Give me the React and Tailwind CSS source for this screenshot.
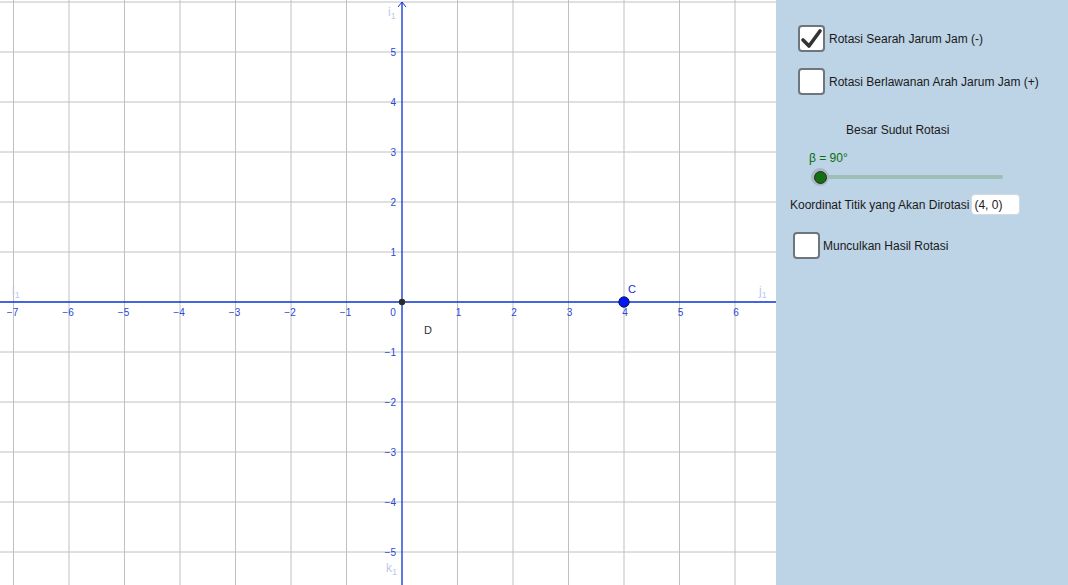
import React from "react";

const OX = 402;
const OY = 302;
const SX = 55.5;
const SY = 50;

const xs = [-7, -6, -5, -4, -3, -2, -1, 1, 2, 3, 4, 5, 6];
const ys = [5, 4, 3, 2, 1, -1, -2, -3, -4, -5];

function Graph() {
  return (
    <svg width="776" height="585" className="block" style={{ fontFamily: '"Liberation Sans", Arial, sans-serif' }}>
      <rect width="776" height="585" fill="#ffffff" />
      {/* grid */}
      {xs.map((v) => (
        <line key={"gx" + v} x1={OX + v * SX} y1="0" x2={OX + v * SX} y2="585" stroke="#c0c0c0" strokeWidth="1" />
      ))}
      {[6, ...ys].map((v) => (
        <line key={"gy" + v} x1="0" y1={OY - v * SY} x2="776" y2={OY - v * SY} stroke="#c0c0c0" strokeWidth="1" />
      ))}
      {/* axes */}
      <line x1="0" y1={OY} x2="776" y2={OY} stroke="#0832d8" strokeWidth="1.3" />
      <line x1={OX} y1="2" x2={OX} y2="585" stroke="#0832d8" strokeWidth="1.3" />
      <polyline points={`${OX - 4},7 ${OX},2 ${OX + 4},7`} fill="none" stroke="#0832d8" strokeWidth="1" />
      {/* x labels */}
      {xs.map((v) => (
        <text key={"lx" + v} x={OX + v * SX + (v < 0 ? -1 : 1)} y={OY + 14} fontSize="10" fill="#2a48d6" textAnchor="middle">
          {v < 0 ? "−" + -v : v}
        </text>
      ))}
      <text x={OX - 9} y={OY + 14} fontSize="10" fill="#2a48d6" textAnchor="middle">0</text>
      {/* y labels */}
      {ys.map((v) => (
        <text key={"ly" + v} x={OX - 6} y={OY - v * SY + 4} fontSize="10" fill="#2a48d6" textAnchor="end">
          {v < 0 ? "−" + -v : v}
        </text>
      ))}
      {/* faded axis names */}
      <text x="388" y="16" fontSize="12" fill="#b9c9ea">i<tspan fontSize="9" dy="3">1</tspan></text>
      <text x="759" y="295" fontSize="12" fill="#b9c9ea">j<tspan fontSize="9" dy="3">1</tspan></text>
      <text x="386" y="572" fontSize="12" fill="#b9c9ea">k<tspan fontSize="9" dy="3">1</tspan></text>
      <text x="12" y="295" fontSize="12" fill="#b9c9ea">l<tspan fontSize="9" dy="3">1</tspan></text>
      {/* points */}
      <circle cx={OX} cy={OY} r="3.2" fill="#2b2b2b" />
      <circle cx="624" cy={OY} r="5.2" fill="#0018f5" stroke="#1a1a40" strokeWidth="1" />
      <text x="628" y="293" fontSize="11" fill="#1530d8">C</text>
      <text x="424" y="334" fontSize="11" fill="#333333">D</text>
    </svg>
  );
}

function Box({ checked }) {
  return (
    <div className="w-[27px] h-[27px] shrink-0 rounded-[4px] border-2 border-[#6e767d] bg-white flex items-center justify-center">
      {checked && (
        <svg width="23" height="23" viewBox="0 0 23 23">
          <polyline points="3,13 9,19 20,4" fill="none" stroke="#333333" strokeWidth="3.6" strokeLinecap="round" strokeLinejoin="round" />
        </svg>
      )}
    </div>
  );
}

export default function App() {
  return (
    <div className="flex w-[1068px] h-[585px] overflow-hidden bg-white text-[12px] text-[#1a1a1a]" style={{ fontFamily: '"Liberation Sans", Arial, sans-serif' }}>
      <div className="w-[776px] shrink-0">
        <Graph />
      </div>
      <div className="flex-1 bg-[#bdd3e6] flex flex-col">
        <label className="flex items-center gap-[4px] ml-[22px] mt-[25px]">
          <Box checked />
          <span>Rotasi Searah Jarum Jam (-)</span>
        </label>
        <label className="flex items-center gap-[4px] ml-[22px] mt-[16px]">
          <Box />
          <span>Rotasi Berlawanan Arah Jarum Jam (+)</span>
        </label>
        <div className="ml-[70px] mt-[28px] leading-[14px]">Besar Sudut Rotasi</div>
        <div className="ml-[33px] mt-[14px] leading-[14px] text-[#0b6e0b]">β = 90°</div>
        <div className="relative ml-[35px] mt-[2px] w-[192px] h-[20px]">
          <div className="absolute left-[9px] right-0 top-[8px] h-[4px] rounded-full bg-[#9dbfb6]" />
          <div className="absolute left-0 top-[1px] w-[18px] h-[18px] rounded-full bg-[#a9b9c3] flex items-center justify-center">
            <div className="w-[13px] h-[13px] rounded-full bg-[#146e14] border border-[#2a2a2a]" />
          </div>
        </div>
        <div className="flex items-center ml-[14px] mt-[7px]">
          <span>Koordinat Titik yang Akan Dirotasi</span>
          <div className="ml-[2px] w-[49px] h-[21px] bg-white rounded-[4px] border border-[#d2dbe3] pl-[2px] flex items-center">(4, 0)</div>
        </div>
        <label className="flex items-center gap-[3px] ml-[17px] mt-[17px]">
          <Box />
          <span>Munculkan Hasil Rotasi</span>
        </label>
      </div>
    </div>
  );
}
